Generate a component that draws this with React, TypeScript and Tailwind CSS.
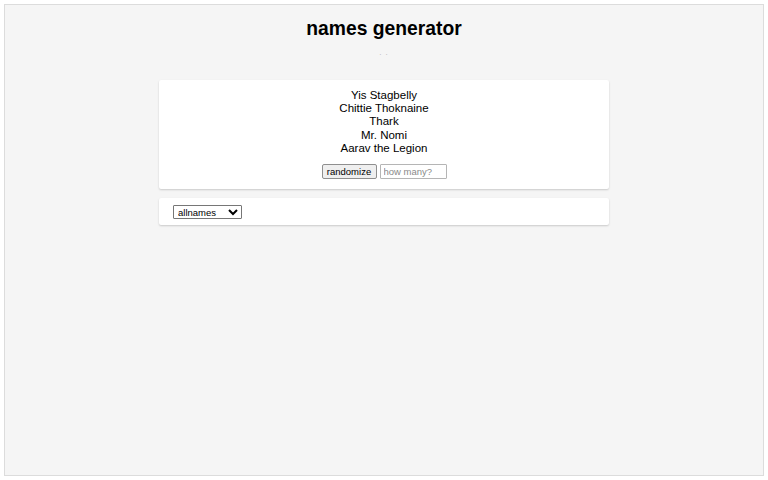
import React from "react";

export default function App() {
  const names = ["Yis Stagbelly", "Chittie Thoknaine", "Thark", "Mr. Nomi", "Aarav the Legion"];
  return (
    <div className="bg-white p-1 w-[768px] h-[480px]" style={{ fontFamily: '"Liberation Sans", Arial, sans-serif' }}>
      <div className="border border-[#dcdcdc] bg-[#f5f5f5] h-[472px] w-[760px] flex flex-col items-center">
        <h1 className="mt-[13px] text-[19.3px] leading-[22px] font-bold text-black">names generator</h1>
        <div className="mt-[8px] text-[8px] leading-[10px] text-[#b4b4b4] tracking-[1px]">. .</div>
        <div className="mt-[22px] w-[450px] bg-white rounded-[2px] shadow-[0_1px_2px_rgba(0,0,0,0.18)] pt-[9px] pb-[10px] flex flex-col items-center">
          <div className="text-[11.5px] leading-[13.2px] text-black text-center">
            {names.map((n) => (
              <div key={n}>{n}</div>
            ))}
          </div>
          <div className="mt-[9px] flex items-center gap-[3px]">
            <button className="h-[15px] w-[55px] bg-[#efefef] border border-[#8f8f8f] rounded-[2px] text-[9.5px] leading-[13px] text-black px-0">
              randomize
            </button>
            <input
              placeholder="how many?"
              className="h-[15px] w-[67px] bg-white border border-[#b5b5b5] rounded-[1px] text-[9.5px] leading-[13px] px-[3px] placeholder:text-[#8a8a8a] outline-none"
            />
          </div>
        </div>
        <div className="mt-[9px] w-[450px] h-[27px] bg-white rounded-[2px] shadow-[0_1px_2px_rgba(0,0,0,0.18)] flex items-center pl-[14px]">
          <select className="h-[14px] w-[69px] border border-[#767676] bg-white text-[9.5px] leading-[12px] text-black rounded-[1px]" style={{ appearance: "auto" }}>
            <option>allnames</option>
          </select>
        </div>
      </div>
    </div>
  );
}
